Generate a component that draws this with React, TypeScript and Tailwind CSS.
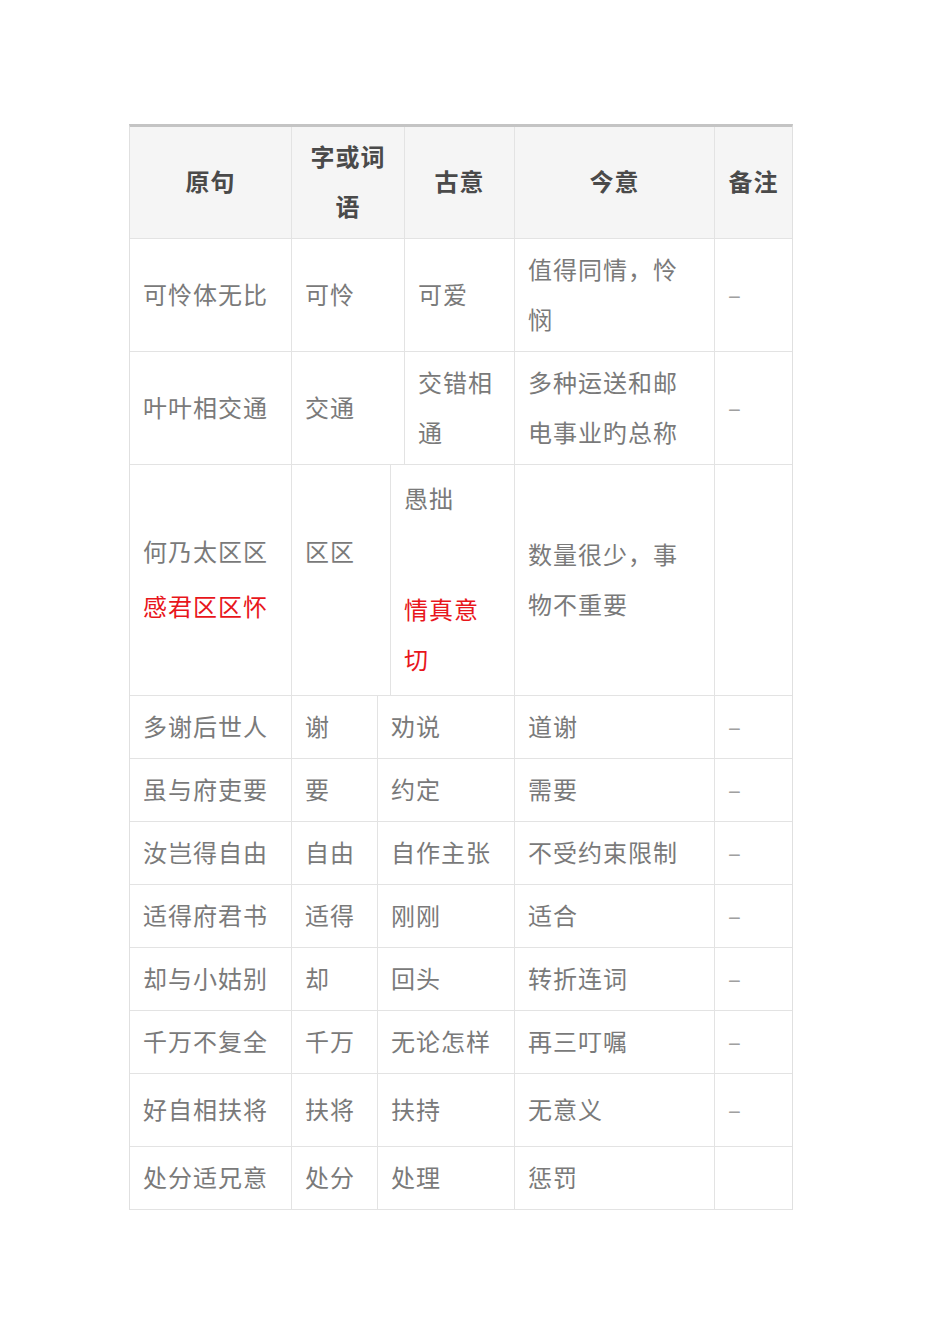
import React from "react";

// ────────────────────────────────────────────────────────────────────────────
// Column widths per row group (the source table has shifting boundaries)
// ────────────────────────────────────────────────────────────────────────────

const COLS_A = ["w-[162px]", "w-[113px]", "w-[110px]", "w-[200px]", "w-[77px]"];
const COLS_B = ["w-[162px]", "w-[99px]", "w-[124px]", "w-[200px]", "w-[77px]"];
const COLS_C = ["w-[162px]", "w-[86px]", "w-[137px]", "w-[200px]", "w-[77px]"];

const FONT = {
  fontFamily: '"Noto Sans CJK SC", "Noto Sans", sans-serif',
};

type Row = {
  cells: string[];
  cols: string[];
  height: string;
};

const SIMPLE_ROWS: Row[] = [
  { cells: ["多谢后世人", "谢", "劝说", "道谢", "–"], cols: COLS_C, height: "h-[63px]" },
  { cells: ["虽与府吏要", "要", "约定", "需要", "–"], cols: COLS_C, height: "h-[63px]" },
  { cells: ["汝岂得自由", "自由", "自作主张", "不受约束限制", "–"], cols: COLS_C, height: "h-[63px]" },
  { cells: ["适得府君书", "适得", "刚刚", "适合", "–"], cols: COLS_C, height: "h-[63px]" },
  { cells: ["却与小姑别", "却", "回头", "转折连词", "–"], cols: COLS_C, height: "h-[63px]" },
  { cells: ["千万不复全", "千万", "无论怎样", "再三叮嘱", "–"], cols: COLS_C, height: "h-[63px]" },
  { cells: ["好自相扶将", "扶将", "扶持", "无意义", "–"], cols: COLS_C, height: "h-[73px]" },
  { cells: ["处分适兄意", "处分", "处理", "惩罚", ""], cols: COLS_C, height: "h-[63px]" },
];

function Cell({
  width,
  last,
  className = "",
  children,
}: {
  width: string;
  last?: boolean;
  className?: string;
  children?: React.ReactNode;
}) {
  return (
    <div
      className={`${width} shrink-0 pl-[13px] pr-[13px] ${
        last ? "" : "border-r border-[#e3e3e3]"
      } ${className}`}
    >
      {children}
    </div>
  );
}

function DataRow({ row }: { row: Row }) {
  return (
    <div className={`flex ${row.height} border-b border-[#e3e3e3]`}>
      {row.cells.map((text, i) => (
        <Cell
          key={i}
          width={row.cols[i]}
          last={i === 4}
          className={`flex items-center pb-[3px] ${i === 4 ? "text-[#a0a0a0]" : ""}`}
        >
          <span>{text}</span>
        </Cell>
      ))}
    </div>
  );
}

export default function App() {
  return (
    <div className="min-h-[1344px] bg-white pt-[124px] pl-[129px]" style={FONT}>
      <div className="w-[664px] border-t-[3px] border-t-[#c4c4c4] border-x border-x-[#e0e0e0] text-[24px] leading-[50px] tracking-[1px] text-[#7a7a7a]">
        {/* Header */}
        <div className="flex h-[112px] bg-[#f5f5f5] border-b border-[#e3e3e3] font-bold text-[#4a4a4a]">
          {["原句", "字或词语", "古意", "今意", "备注"].map((h, i) => (
            <Cell
              key={h}
              width={COLS_A[i]}
              last={i === 4}
              className="flex items-center justify-center text-center pb-[3px]"
            >
              <span>{h}</span>
            </Cell>
          ))}
        </div>

        {/* Row 1 */}
        <DataRow
          row={{
            cells: ["可怜体无比", "可怜", "可爱", "值得同情，怜悯", "–"],
            cols: COLS_A,
            height: "h-[113px]",
          }}
        />

        {/* Row 2 */}
        <DataRow
          row={{
            cells: ["叶叶相交通", "交通", "交错相通", "多种运送和邮电事业旳总称", "–"],
            cols: COLS_A,
            height: "h-[113px]",
          }}
        />

        {/* Row 3 — mixed black / red content */}
        <div className="flex h-[231px] border-b border-[#e3e3e3]">
          <Cell width={COLS_B[0]} className="flex flex-col justify-center pb-[3px]">
            <p>何乃太区区</p>
            <p className="mt-[5px] text-[#e8161b]">感君区区怀</p>
          </Cell>
          <Cell width={COLS_B[1]} className="flex flex-col justify-center pb-[3px]">
            <p>区区</p>
            <p className="mt-[5px]">&nbsp;</p>
          </Cell>
          <Cell width={COLS_B[2]} className="pt-[8px]">
            <p>愚拙</p>
            <p>&nbsp;</p>
            <p className="mt-[11px] text-[#e8161b]">情真意切</p>
          </Cell>
          <Cell width={COLS_B[3]} className="flex items-center pb-[3px]">
            <span>数量很少，事物不重要</span>
          </Cell>
          <Cell width={COLS_B[4]} last />
        </div>

        {SIMPLE_ROWS.map((row) => (
          <DataRow key={row.cells[0]} row={row} />
        ))}
      </div>
    </div>
  );
}
